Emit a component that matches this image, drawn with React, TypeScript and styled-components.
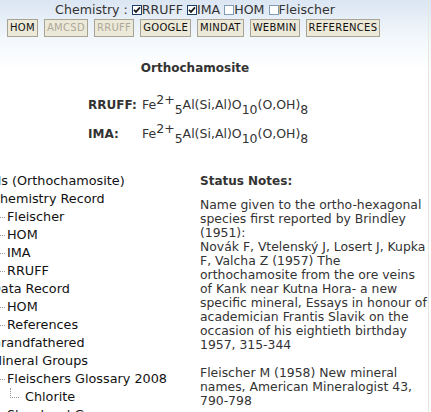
import styled, { createGlobalStyle } from 'styled-components'

const GlobalStyle = createGlobalStyle`
  html, body {
    margin: 0;
    padding: 0;
  }
  body {
    background: linear-gradient(#dbe6f3 0, #f4f8fc 40px, #ffffff 70px) no-repeat #ffffff;
    font-family: 'DejaVu Sans', Verdana, sans-serif;
    font-size: 12px;
    color: #222;
    width: 431px;
    height: 412px;
    overflow: hidden;
  }
`

const Page = styled.div`
  width: 428px;
  height: 412px;
  border-right: 1px solid #e4e9df;
  overflow: hidden;
`

const Head = styled.div`
  width: 390px;
  text-align: center;
`

const ChemLine = styled.div`
  height: 18px;
  line-height: 19px;
  font-size: 12.6px;
  white-space: nowrap;
  color: #333;
`

const Check = styled.span<{ $on?: boolean }>`
  display: inline-block;
  box-sizing: border-box;
  width: 10px;
  height: 10px;
  border: 1px solid ${(p) => (p.$on ? '#1c3f6e' : '#7f9db9')};
  background: #fff;
  position: relative;
  vertical-align: -1px;

  svg {
    position: absolute;
    left: 0;
    top: 0;
  }
`

const Buttons = styled.div`
  display: flex;
  gap: 6px;
  padding-left: 7px;
  margin-top: 1px;
`

const Btn = styled.span<{ $off?: boolean }>`
  display: inline-block;
  height: 16px;
  line-height: 16px;
  padding: 0 2px;
  border: 1px solid #a7a395;
  background: #ece9d8;
  font-size: 10px;
  letter-spacing: 0.3px;
  color: ${(p) => (p.$off ? '#aca899' : '#111')};
`

const Title = styled.div`
  width: 390px;
  text-align: center;
  font-weight: bold;
  margin-top: 23px;
  height: 16px;
  line-height: 16px;
  color: #333;
`

const Formulas = styled.div`
  display: grid;
  grid-template-columns: 54px auto;
  row-gap: 11px;
  margin: 20px 0 0 88px;
  color: #333;
`

const Label = styled.div`
  font-weight: bold;
  line-height: 18px;
`

const Formula = styled.div`
  line-height: 18px;
  white-space: nowrap;
  font-size: 12.5px;

  sup {
    font-size: 12.5px;
    vertical-align: 5px;
    line-height: 0;
  }
  sub {
    font-size: 12.5px;
    vertical-align: -5px;
    line-height: 0;
  }
`

const Columns = styled.div`
  display: grid;
  grid-template-columns: 190px 229px;
  column-gap: 10px;
  margin-top: 29px;
`

const Tree = styled.div`
  overflow: hidden;
  color: #111;
  font-size: 12.8px;
`

const Row = styled.div`
  position: relative;
  height: 18px;
  line-height: 18px;
  white-space: nowrap;
`

const RowText = styled.span<{ $indent: number }>`
  display: inline-block;
  margin-left: ${(p) => p.$indent}px;
`

const Branch = styled.span<{ $deep?: boolean }>`
  position: absolute;
  top: 0;
  left: ${(p) => (p.$deep ? 10 : 0)}px;
  width: ${(p) => (p.$deep ? 8 : 5)}px;
  height: 9px;
  border-bottom: 1px dotted #999;
  border-left: ${(p) => (p.$deep ? '1px dotted #999' : 'none')};
`

const Notes = styled.div`
  color: #333;
  font-size: 12.4px;
  line-height: 14px;
  margin-top: 2px;

  h4 {
    margin: 0 0 10px;
    font-size: 12px;
    line-height: 14px;
  }
  p {
    margin: 0 0 14px;
  }
`

const indents = [-46, -9, 7, 25]

const treeRows: [number, string][] = [
  [0, 'Minerals (Orthochamosite)'],
  [1, 'Chemistry Record'],
  [2, 'Fleischer'],
  [2, 'HOM'],
  [2, 'IMA'],
  [2, 'RRUFF'],
  [1, 'Data Record'],
  [2, 'HOM'],
  [2, 'References'],
  [1, 'Grandfathered'],
  [1, 'Mineral Groups'],
  [2, 'Fleischers Glossary 2008'],
  [3, 'Chlorite'],
  [2, 'Structural Groups'],
]

const Tick = () => (
  <svg width="8" height="8" viewBox="0 0 8 8">
    <path d="M1 3.8 L3 5.9 L7 1.4" stroke="#1a1a1a" strokeWidth="1.7" fill="none" />
  </svg>
)

const Fe = () => (
  <Formula>
    Fe<sup>2+</sup>
    <sub>5</sub>Al(Si,Al)O<sub>10</sub>(O,OH)<sub>8</sub>
  </Formula>
)

export default function App() {
  return (
    <Page>
      <GlobalStyle />
      <Head>
        <ChemLine>
          Chemistry :{' '}
          <Check $on>
            <Tick />
          </Check>
          RRUFF{' '}
          <Check $on>
            <Tick />
          </Check>
          IMA <Check />
          HOM <Check />
          Fleischer
        </ChemLine>
        <Buttons>
          <Btn>HOM</Btn>
          <Btn $off>AMCSD</Btn>
          <Btn $off>RRUFF</Btn>
          <Btn>GOOGLE</Btn>
          <Btn>MINDAT</Btn>
          <Btn>WEBMIN</Btn>
          <Btn>REFERENCES</Btn>
        </Buttons>
      </Head>
      <Title>Orthochamosite</Title>
      <Formulas>
        <Label>RRUFF:</Label>
        <Fe />
        <Label>IMA:</Label>
        <Fe />
      </Formulas>
      <Columns>
        <Tree>
          {treeRows.map(([level, text], i) => (
            <Row key={i}>
              {level >= 2 && <Branch $deep={level === 3} />}
              <RowText $indent={indents[level]}>{text}</RowText>
            </Row>
          ))}
        </Tree>
        <Notes>
          <h4>Status Notes:</h4>
          <p>
            Name given to the ortho-hexagonal species first reported by Brindley (1951):
            <br />
            Novák F, Vtelenský J, Losert J, Kupka F, Valcha Z (1957) The orthochamosite from the ore
            veins of Kank near Kutna Hora- a new specific mineral, Essays in honour of academician
            Frantis Slavik on the occasion of his eightieth birthday 1957, 315-344
          </p>
          <p>Fleischer M (1958) New mineral names, American Mineralogist 43, 790-798</p>
        </Notes>
      </Columns>
    </Page>
  )
}
